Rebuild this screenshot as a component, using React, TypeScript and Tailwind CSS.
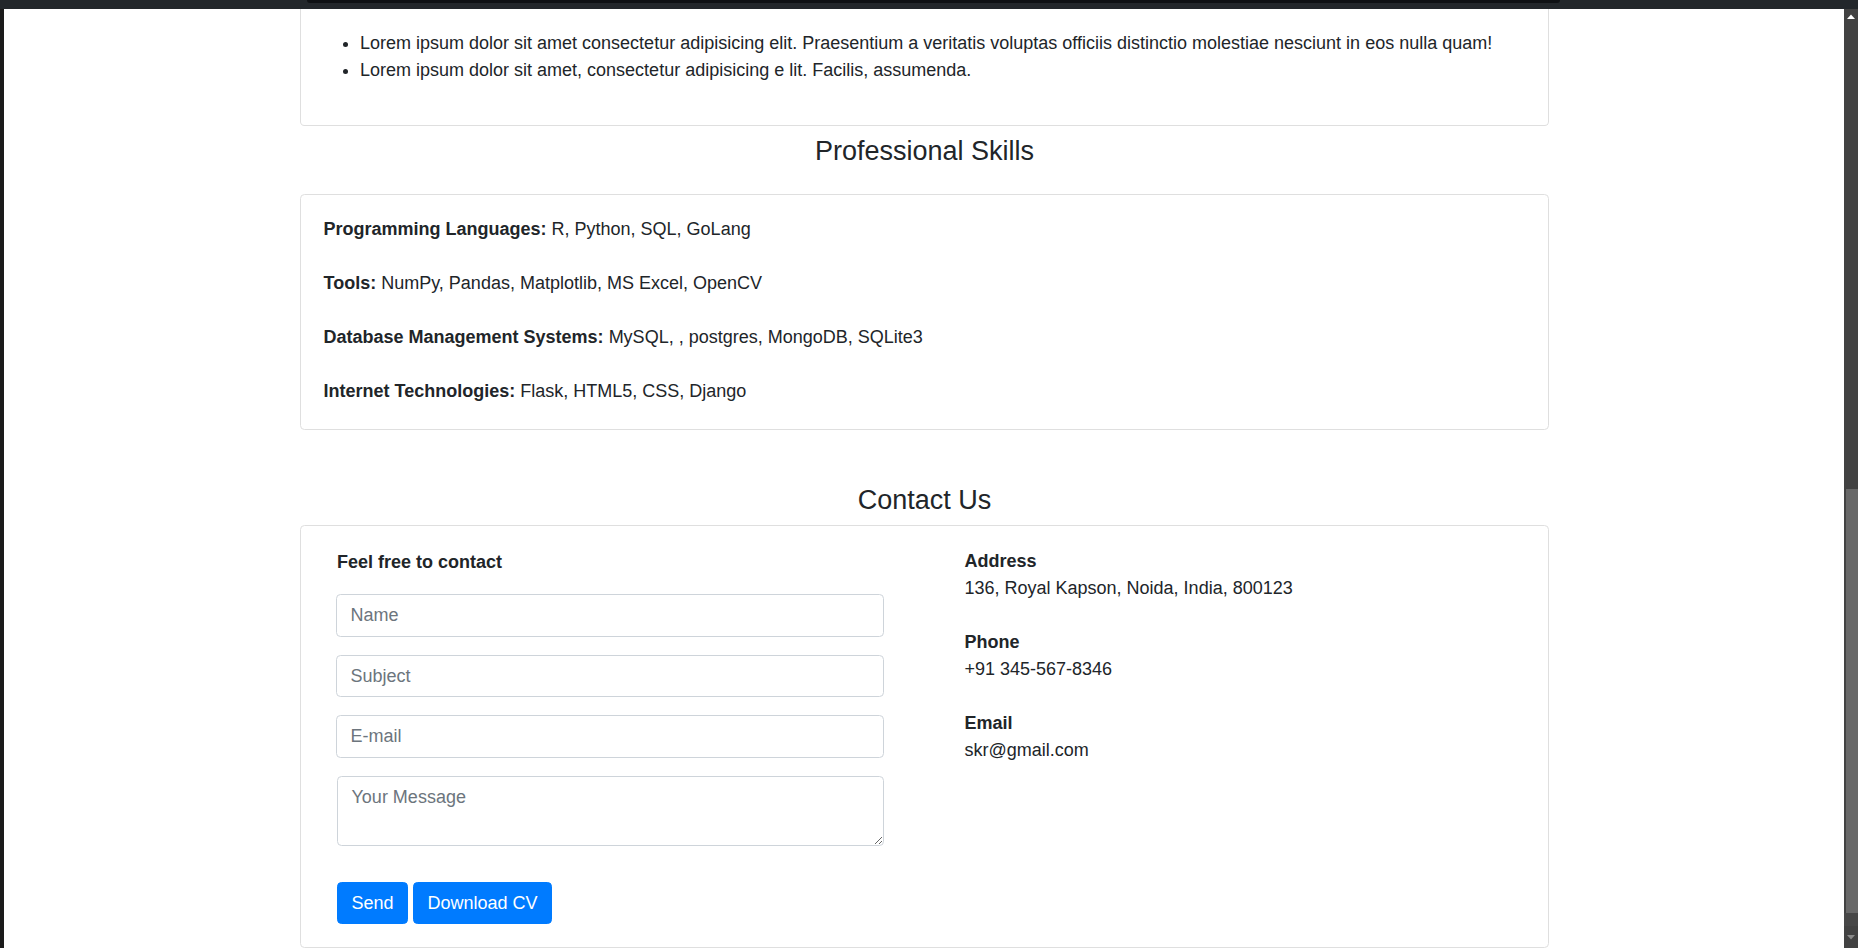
import React from "react";

const skills: [string, string][] = [
  ["Programming Languages:", "R, Python, SQL, GoLang"],
  ["Tools:", "NumPy, Pandas, Matplotlib, MS Excel, OpenCV"],
  ["Database Management Systems:", "MySQL, , postgres, MongoDB, SQLite3"],
  ["Internet Technologies:", "Flask, HTML5, CSS, Django"],
];

const contacts: [string, string][] = [
  ["Address", "136, Royal Kapson, Noida, India, 800123"],
  ["Phone", "+91 345-567-8346"],
  ["Email", "skr@gmail.com"],
];

export default function App() {
  return (
    <div className="h-[948px] w-[1858px] overflow-hidden bg-white flex flex-col font-['Liberation_Sans',Arial,sans-serif] text-[#212529] text-[18px] leading-[27px]">
      {/* top dark bar */}
      <div className="relative h-[9px] shrink-0 bg-[#23272b]">
        <div className="absolute left-[307px] top-0 h-[3px] w-[1253px] rounded-b-[3px] bg-[#0f1114]" />
      </div>
      <div className="flex flex-1 min-h-0">
        <div className="w-[4px] shrink-0 bg-[#1b1b1b]" />
        <main className="flex-1 overflow-hidden">
          <div className="ml-[296px] w-[1249px]">
            {/* top card (cut off) */}
            <div className="border-x border-b border-[#dfdfdf] rounded-b-[4.5px] px-[22.5px] pt-[21px] pb-[41px]">
              <ul className="list-disc pl-[36.5px]">
                <li>
                  Lorem ipsum dolor sit amet consectetur adipisicing elit. Praesentium a veritatis voluptas officiis distinctio molestiae nesciunt in eos nulla quam!
                </li>
                <li>Lorem ipsum dolor sit amet, consectetur adipisicing e lit. Facilis, assumenda.</li>
              </ul>
            </div>

            <h2 className="mt-[9px] mb-[26.6px] text-center text-[27px] leading-[32.4px] font-normal">
              Professional Skills
            </h2>

            <div className="border border-[#dfdfdf] rounded-[4.5px] px-[22.5px] pt-[21.3px] pb-[23.7px] flex flex-col gap-[27px]">
              {skills.map(([k, v]) => (
                <p key={k}>
                  <b className="font-bold">{k}</b> {v}
                </p>
              ))}
            </div>

            <h2 className="mt-[54px] mb-[8.6px] text-center text-[27px] leading-[32.4px] font-normal">
              Contact Us
            </h2>

            <div className="border border-[#dfdfdf] rounded-[4.5px] pl-[35px] pt-[22.5px] pb-[22.5px] flex">
              <div className="w-[548.3px] shrink-0 flex flex-col">
                <h6 className="pl-[1px] pt-[1px] font-bold text-[18px] leading-[27px]">Feel free to contact</h6>
                <input
                  type="text"
                  placeholder="Name"
                  className="mt-[17.8px] h-[42.5px] w-full rounded-[4.5px] border border-[#ced4da] bg-white px-[13.5px] text-[18px] text-[#495057] placeholder:text-[#6c757d] outline-none"
                />
                <input
                  type="text"
                  placeholder="Subject"
                  className="mt-[18px] h-[42.5px] w-full rounded-[4.5px] border border-[#ced4da] bg-white px-[13.5px] text-[18px] text-[#495057] placeholder:text-[#6c757d] outline-none"
                />
                <input
                  type="email"
                  placeholder="E-mail"
                  className="mt-[18px] h-[42.5px] w-full rounded-[4.5px] border border-[#ced4da] bg-white px-[13.5px] text-[18px] text-[#495057] placeholder:text-[#6c757d] outline-none"
                />
                <textarea
                  rows={2}
                  placeholder="Your Message"
                  className="ml-[1px] mt-[18px] h-[70px] w-[547.3px] rounded-[4.5px] border border-[#ced4da] bg-white px-[13.5px] py-[6.75px] text-[18px] leading-[27px] text-[#495057] placeholder:text-[#6c757d] outline-none resize-y"
                />
                <div className="ml-[1px] mt-[36.3px] flex gap-[5px]">
                  <button className="h-[42px] rounded-[4.5px] border border-[#007bff] bg-[#007bff] px-[13.5px] text-[18px] leading-[27px] text-white">
                    Send
                  </button>
                  <button className="h-[42px] rounded-[4.5px] border border-[#007bff] bg-[#007bff] px-[13.5px] text-[18px] leading-[27px] text-white">
                    Download CV
                  </button>
                </div>
              </div>
              <div className="ml-[80.2px] flex flex-col gap-[27px]">
                {contacts.map(([k, v]) => (
                  <div key={k}>
                    <div className="font-bold">{k}</div>
                    <div>{v}</div>
                  </div>
                ))}
              </div>
            </div>
          </div>
        </main>
        {/* scrollbar */}
        <div className="w-[14px] shrink-0 bg-[#424242] flex flex-col">
          <div className="h-[14px] flex items-center justify-center">
            <svg width="8" height="5" viewBox="0 0 8 5">
              <polygon points="0,5 4,0.5 8,5" fill="#ffffff" />
            </svg>
          </div>
          <div className="flex-1" />
          <div className="ml-[2px] h-[424.5px] bg-[#686868]" />
          <div className="h-[35px] flex flex-col">
            <div className="h-[13px] bg-[#474747]" />
            <div className="flex-1 flex items-center justify-center">
              <svg width="8" height="5" viewBox="0 0 8 5">
                <polygon points="0,0 8,0 4,4.5" fill="#8a8a8a" />
              </svg>
            </div>
          </div>
        </div>
      </div>
    </div>
  );
}
